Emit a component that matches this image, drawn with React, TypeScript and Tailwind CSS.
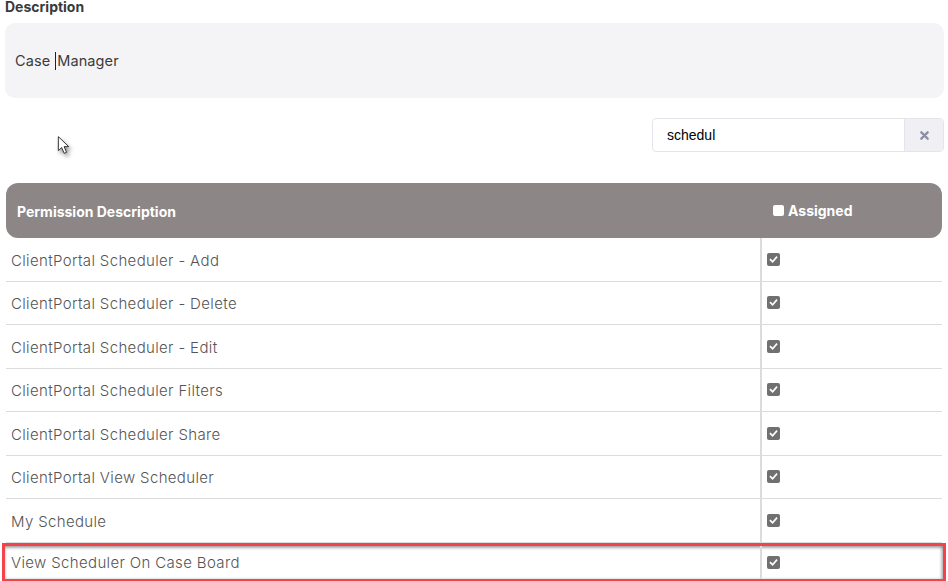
import React from 'react';

const rows = [
  'ClientPortal Scheduler - Add',
  'ClientPortal Scheduler - Delete',
  'ClientPortal Scheduler - Edit',
  'ClientPortal Scheduler Filters',
  'ClientPortal Scheduler Share',
  'ClientPortal View Scheduler',
  'My Schedule',
];

const CheckedBox: React.FC = () => (
  <span className="inline-flex items-center justify-center w-[13px] h-[13px] rounded-[2px] bg-[#707070]">
    <svg viewBox="0 0 12 12" className="w-[9px] h-[9px]">
      <path d="M2 6.2 L4.8 9 L10 3" fill="none" stroke="#fff" strokeWidth="2.2" strokeLinecap="square" />
    </svg>
  </span>
);

const Pointer: React.FC = () => (
  <svg viewBox="0 0 20 26" className="absolute left-[57px] top-[135px] w-[18px] h-[24px] drop-shadow-[2px_3px_2px_rgba(0,0,0,0.45)]">
    <path d="M1.5 1.5 L1.5 17 L5.2 13.6 L8 20 L10.6 18.9 L7.9 12.6 L13 12.6 Z" fill="#fff" stroke="#222" strokeWidth="1" strokeLinejoin="round" />
  </svg>
);

export default function App() {
  return (
    <div className="relative w-[948px] h-[581px] overflow-hidden bg-white font-['Inter',sans-serif] text-[#333]">
      <div className="px-[5px] -mt-[3px]">
        <p className="text-[14px] font-bold text-[#3a3a3a] leading-[20px]">Description</p>
        <div className="mt-[6px] h-[75px] w-[939px] rounded-[10px] bg-[#f4f4f6] flex items-center px-[10px] text-[14.5px] text-[#3c3c3c] tracking-[0.1px]">
          <span>Case</span>
          <span className="inline-block w-px h-[18px] bg-[#222] ml-[5px] mr-[1px]"></span>
          <span>Manager</span>
        </div>
      </div>

      <div className="flex justify-end pr-[4px] mt-[20px]">
        <div className="flex h-[34px] w-[292px] border border-[#e4e5ea] rounded-[4px] overflow-hidden">
          <div className="flex-1 flex items-center pl-[14px] text-[14px] text-black font-['Liberation_Sans',sans-serif]">schedul</div>
          <div className="w-[39px] bg-[#f0f0f4] border-l border-[#e4e5ea] flex items-center justify-center">
            <svg viewBox="0 0 10 10" className="w-[9px] h-[9px]">
              <path d="M1.5 1.5 L8.5 8.5 M8.5 1.5 L1.5 8.5" stroke="#8e8ea6" strokeWidth="2.6" strokeLinecap="round" />
            </svg>
          </div>
        </div>
      </div>

      <div className="mx-[6px] mt-[31px]">
        <div className="flex h-[55px] items-center rounded-[12px] bg-[#8c8786] text-white text-[14px] font-bold">
          <div className="w-[755px] pl-[11px] pt-[2px]">Permission Description</div>
          <div className="flex items-center gap-[4px] pl-[12px]">
            <span className="inline-block w-[11px] h-[11px] rounded-[2px] bg-white"></span>
            <span>Assigned</span>
          </div>
        </div>
        {rows.map((r) => (
          <div key={r} className="flex h-[43.5px] border-b border-[#dcdcdc]">
            <div className="w-[754px] flex items-center pl-[5px] pt-[3px] text-[15px] tracking-[0.35px] text-[#555] font-light">{r}</div>
            <div className="border-l-2 border-[#dcdcdc] flex items-center pl-[5px]">
              <CheckedBox />
            </div>
          </div>
        ))}
      </div>

      <div className="mx-[2px] h-[39px] border-[3px] border-[#f3434b]">
        <div className="h-full flex shadow-[inset_0_2px_3px_rgba(0,0,0,0.3),inset_-2px_0_3px_rgba(0,0,0,0.2)]">
          <div className="w-[755px] flex items-center pl-[6px] pt-[3px] text-[15px] tracking-[0.35px] text-[#555] font-light">View Scheduler On Case Board</div>
          <div className="border-l-2 border-[#dcdcdc] flex items-center pl-[5px]">
            <CheckedBox />
          </div>
        </div>
      </div>

      <Pointer />
    </div>
  );
}
